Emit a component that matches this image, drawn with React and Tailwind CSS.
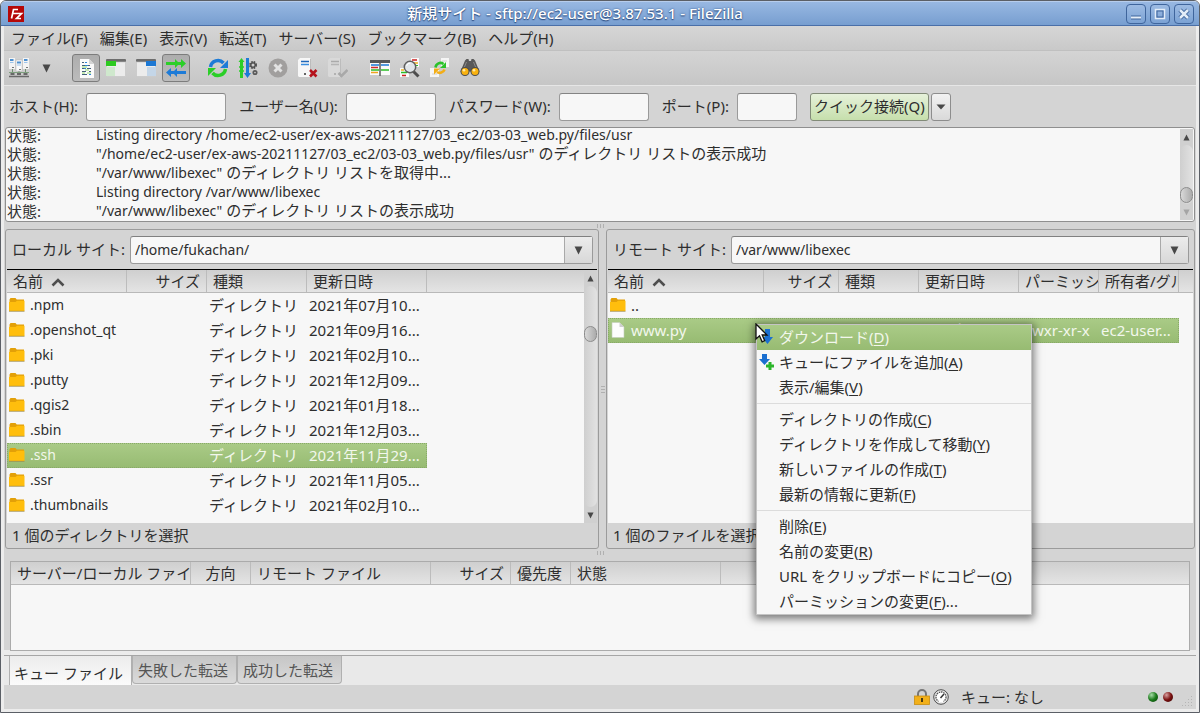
import { useState } from 'react';

const menus = ['ファイル(F)', '編集(E)', '表示(V)', '転送(T)', 'サーバー(S)', 'ブックマーク(B)', 'ヘルプ(H)'];

const logLines = [
    { latin: 'Listing directory /home/ec2-user/ex-aws-20211127/03_ec2/03-03_web.py/files/usr', text: '' },
    { latin: '"/home/ec2-user/ex-aws-20211127/03_ec2/03-03_web.py/files/usr"', text: ' のディレクトリ リストの表示成功' },
    { latin: '"/var/www/libexec"', text: ' のディレクトリ リストを取得中...' },
    { latin: 'Listing directory /var/www/libexec', text: '' },
    { latin: '"/var/www/libexec"', text: ' のディレクトリ リストの表示成功' },
];

const localFiles = [
    { name: '.npm', date: '2021年07月10...' },
    { name: '.openshot_qt', date: '2021年09月16...' },
    { name: '.pki', date: '2021年02月10...' },
    { name: '.putty', date: '2021年12月09...' },
    { name: '.qgis2', date: '2021年01月18...' },
    { name: '.sbin', date: '2021年12月03...' },
    { name: '.ssh', date: '2021年11月29...' },
    { name: '.ssr', date: '2021年11月05...' },
    { name: '.thumbnails', date: '2021年02月10...' },
    { name: '.vnc', date: '2021年02月10...' },
];

const contextMenu = [
    [
        { label: 'ダウンロード', hotkey: 'D', icon: 'download' },
        { label: 'キューにファイルを追加', hotkey: 'A', icon: 'queue' },
        { label: '表示/編集', hotkey: 'V' },
    ],
    [
        { label: 'ディレクトリの作成', hotkey: 'C' },
        { label: 'ディレクトリを作成して移動', hotkey: 'Y' },
        { label: '新しいファイルの作成', hotkey: 'T' },
        { label: '最新の情報に更新', hotkey: 'F' },
    ],
    [
        { label: '削除', hotkey: 'E' },
        { label: '名前の変更', hotkey: 'R' },
        { label: 'URL をクリップボードにコピー', hotkey: 'O' },
        { label: 'パーミッションの変更', hotkey: 'F', tail: '...' },
    ],
];

const headBar = 'bg-linear-to-b from-[#cfcfcf] to-[#e4e4e4] border-b border-[#b9b9b9]';
const selectedRow = 'bg-linear-to-b from-[#aacb87] to-[#97bb72] text-[#f2f7ec] outline-1 -outline-offset-1 outline-dotted outline-[#88a968]';

/* ---------- Icons ---------- */

function Icon({ children, size = 20 }) {
    return <svg width={size} height={size} viewBox="0 0 20 20" aria-hidden="true" className="shrink-0">{children}</svg>;
}

function Triangle({ up, light, big }) {
    const fill = light ? '#a5a5a5' : '#484848';
    return (
        <svg width={big ? 9 : 7} height={big ? 9 : 7} viewBox="0 0 8 8" aria-hidden="true" className="shrink-0">
            <path d={up ? 'M4 0.5 7.5 7.5H0.5z' : 'M4 7.5 7.5 0.5H0.5z'} fill={fill} />
        </svg>
    );
}

function SiteManagerIcon() {
    return (
        <Icon>
            <path d="M3.500 11v5M10 13v3M16.500 11v5" stroke="#6f8f6f" fill="none" />
            <path d="M0 14.500h20" stroke="#7f9f7f" />
            <path d="M0 18.500h20" stroke="#686868" strokeWidth="1.500" />
            <path d="M1.500 16h4M8 16h4M14.500 16h4" stroke="#686868" strokeWidth="2" />
            <rect x="0" y="0" width="6" height="11" fill="#f4f4f4" />
            <rect x="14" y="0" width="6" height="11" fill="#f4f4f4" />
            <rect x="7" y="2" width="6" height="11" fill="#fbfbfb" stroke="#b5b5b5" strokeWidth="0.500" />
            <path d="M1 2h3.500M15 2h3.500M8 4.500h4" stroke="#4d90d0" strokeWidth="2" />
            <path d="M1 4.500h3.500M15 4.500h3.500M8 7h4" stroke="#9ec4ea" />
            <path d="M3 9.500h2M17 9.500h2M10 11.500h2" stroke="#777777" />
        </Icon>
    );
}

function LogIcon() {
    return (
        <Icon>
            <path d="M4 1h9l5 5v14H4z" fill="#fbfbfb" />
            <path d="M13 1v5h5z" fill="#d4d4d4" />
            <path d="M6 4.500h2M6 7.500h3M12 7.500h2M6 10.500h2M11 10.500h4M6 13.500h4M13 13.500h2M6 16.500h5" stroke="#44607c" />
            <path d="M9 4.500h2M9 7.500h3M8 10.500h2M13 16.500h2" stroke="#2f83d6" />
            <path d="M6 9h5M9 12h4M6 15h3M11 15h4" stroke="#8ed66c" />
        </Icon>
    );
}

function PaneIcon({ side }) {
    const left = side === 'left';
    return (
        <Icon>
            <rect x="0" y="1" width="20" height="3" rx="1" fill="#6d6d6d" />
            <rect x="0.500" y="4" width="19" height="14.500" fill="#ececec" stroke="#c2c2c2" strokeWidth="0.600" />
            {left ? (
                <>
                    <rect x="0" y="3" width="10" height="5" fill="#2ccb20" />
                    <rect x="0" y="9" width="9" height="9" fill="#cfe8cd" />
                </>
            ) : (
                <>
                    <rect x="10" y="3" width="10" height="5" fill="#1c78d4" />
                    <rect x="11" y="9" width="9" height="9" fill="#c4d6e8" />
                </>
            )}
        </Icon>
    );
}

function TransferIcon() {
    return (
        <Icon>
            <path d="M0 4h9V1l3 3h3V1l5 4.500L15 10V7h-3l-3 3V7H0z" fill="#2bcf28" />
            <path d="M20 13h-9v-3l-3 3H5v-3l-5 4.500L5 19v-3h3l3 3v-3h9z" fill="#1d7bd7" />
        </Icon>
    );
}

function RefreshIcon() {
    return (
        <Icon>
            <path d="M2.500 9A7.500 7.500 0 0 1 15.500 5" stroke="#1d7bd7" strokeWidth="3.500" fill="none" />
            <path d="M20 2v8h-8z" fill="#1d7bd7" />
            <path d="M17.500 11A7.500 7.500 0 0 1 4.500 15" stroke="#2bcf28" strokeWidth="3.500" fill="none" />
            <path d="M0 18v-8h8z" fill="#2bcf28" />
        </Icon>
    );
}

function ProcessQueueIcon() {
    return (
        <Icon>
            <path d="M3.500 0 6.500 4H5v16H2V4H.5z" fill="#2bcf28" />
            <path d="M1 9h5M1 13h5" stroke="#2bcf28" strokeWidth="1.500" />
            <path d="M8 0h3v15h2l-3.500 5L6 15h2z" fill="#1d7bd7" />
            <circle cx="15" cy="7" r="3" fill="none" stroke="#4f4f4f" strokeWidth="2" strokeDasharray="1.600 0.800" />
            <circle cx="15" cy="7" r="2.200" fill="none" stroke="#4f4f4f" strokeWidth="1.300" />
            <circle cx="17" cy="14.500" r="1.700" fill="none" stroke="#5a5a5a" strokeWidth="1.700" />
        </Icon>
    );
}

function CancelIcon() {
    return (
        <Icon>
            <circle cx="10" cy="10" r="9.500" fill="#a19f9e" />
            <path d="M6.500 6.500l7 7M13.500 6.500l-7 7" stroke="#e2e2e2" strokeWidth="3" />
        </Icon>
    );
}

function ServerIcon({ off }) {
    return (
        <Icon>
            <path d="M0 2 2 0h11v19H1l-1-1z" fill={off ? '#d9d9d9' : '#f7f7f7'} />
            <path d="M13 0v19h-1V1z" fill="#bcbcbc" />
            <path d="M3 3.500h8" stroke={off ? '#aaaaaa' : '#1c66b8'} strokeWidth="1.500" />
            <path d="M3 6.500h8" stroke={off ? '#b5b5b5' : '#3a8ee0'} strokeWidth="1.500" />
            <circle cx="7" cy="16" r="1" fill={off ? '#a5a5a5' : '#333333'} />
            {off
                ? <path d="M10.500 15l3 3 6-6" stroke="#a9a9a9" strokeWidth="2.500" fill="none" />
                : <path d="M12 12l6.500 6.500M18.500 12 12 18.500" stroke="#b5121b" strokeWidth="2.600" />}
        </Icon>
    );
}

function CompareIcon() {
    return (
        <Icon>
            <rect x="0" y="3" width="20" height="14" fill="#fafafa" />
            <rect x="0" y="2" width="20" height="3" fill="#585858" />
            <path d="M1 7h8M11 7h8" stroke="#1d7bd7" strokeWidth="1.500" />
            <path d="M1 9.500h7" stroke="#d02a2a" strokeWidth="1.500" />
            <path d="M1 12h8M11 12h8" stroke="#2bbf28" strokeWidth="1.500" />
            <path d="M1 14.500h7" stroke="#efa51e" strokeWidth="1.500" />
            <path d="M10 5v13" stroke="#585858" strokeWidth="1.500" />
        </Icon>
    );
}

function SearchFilesIcon() {
    return (
        <Icon>
            <rect x="11" y="0" width="8" height="9" fill="#fafafa" />
            <path d="M12 2h5" stroke="#cc1f1f" strokeWidth="1.500" />
            <path d="M14 5h4" stroke="#efb01e" strokeWidth="1.500" />
            <path d="M15 7.500h3" stroke="#2bbf28" />
            <rect x="0" y="10" width="9" height="9" fill="#fafafa" />
            <path d="M1 12h3" stroke="#efb01e" strokeWidth="1.500" />
            <path d="M1 14.500h6" stroke="#2bbf28" strokeWidth="1.500" />
            <path d="M2 17.500h4" stroke="#cc1f1f" strokeWidth="1.500" />
            <path d="M13.500 13.500l5 5" stroke="#4d4d4d" strokeWidth="3" />
            <circle cx="10" cy="9" r="5.700" fill="#e1e6ea" stroke="#5f5f5f" strokeWidth="1.500" />
            <path d="M6.500 8a4 4 0 0 1 4-3" stroke="#ffffff" fill="none" />
        </Icon>
    );
}

function SyncBrowseIcon() {
    return (
        <Icon>
            <path d="M11 0h8v9h-8zM0 10h9v9H0z" fill="#f5f5f5" />
            <path d="M12 3h5M2 16h5" stroke="#d0d0d0" />
            <path d="M5.500 9.500A5 5 0 0 1 13.500 6" stroke="#2bc22a" strokeWidth="2.600" fill="none" />
            <path d="M16 4v6h-6z" fill="#2bc22a" />
            <path d="M14.500 11.500A5 5 0 0 1 7 14" stroke="#f3ae17" strokeWidth="2.600" fill="none" />
            <path d="M4 16.500v-6h6z" fill="#f3ae17" />
        </Icon>
    );
}

function BinocularsIcon() {
    return (
        <Icon>
            <path d="M5 2.500 6.500 1h2l.5 2h2l.5-2h2L15 2.500l4.500 11H.5z" fill="#585858" />
            <path d="M6.500 4 4 10M13.500 4l2.500 6" stroke="#8a8a8a" />
            <circle cx="5" cy="13.500" r="4.500" fill="#4c4c4c" />
            <circle cx="15" cy="13.500" r="4.500" fill="#4c4c4c" />
            <circle cx="5" cy="13.500" r="3.500" fill="#f9b20f" />
            <circle cx="15" cy="13.500" r="3.500" fill="#f9b20f" />
            <circle cx="4" cy="12.300" r="1.300" fill="#ffe9a8" />
            <circle cx="14" cy="12.300" r="1.300" fill="#ffe9a8" />
        </Icon>
    );
}

function FolderIcon() {
    return (
        <svg width="16" height="16" viewBox="0 0 16 16" aria-hidden="true" className="shrink-0">
            <path d="M0.500 2.500 1.500 1h5l1.200 1.500H15v5H0.500z" fill="#e3a008" />
            <path d="M0 5h6.500L8 3.800h7.500V14H0z" fill="#ffbe0d" />
            <path d="M0 14.300h15.500" stroke="#a08a48" strokeWidth="0.800" />
        </svg>
    );
}

function FileIcon() {
    return (
        <svg width="16" height="16" viewBox="0 0 16 16" aria-hidden="true" className="shrink-0">
            <path d="M2 0.500h7.500L14 5v10.500H2z" fill="#fdfdfd" stroke="#c4ccbc" strokeWidth="0.600" />
            <path d="M9.500 0.500V5H14z" fill="#cfcfcf" />
        </svg>
    );
}

function QueueArrowIcon({ plus }) {
    return (
        <svg width="16" height="16" viewBox="0 0 16 16" aria-hidden="true" className="shrink-0">
            <path d={plus ? 'M3 0h5v5h3l-5.500 6L0 5h3z' : 'M6 0h5v8h3l-5.500 7-5.500-7H6z'} fill="#1a6fd0" />
            {plus && <path d="M9.500 8h3v2.500H15v3h-2.500V16h-3v-2.500H7v-3h2.500z" fill="#2bb52a" />}
        </svg>
    );
}

/* ---------- Small pieces ---------- */

function ToolButton({ label, pressed, children }) {
    return (
        <button
            aria-label={label}
            className={`flex h-7 w-7 items-center justify-center rounded-[3px] border ${pressed ? 'border-[#7c7c7c] bg-linear-to-b from-[#adadad] to-[#bcbcbc]' : 'border-transparent'}`}
        >
            {children}
        </button>
    );
}

function QuickField({ id, label, width, type = 'text' }) {
    return (
        <div className="flex items-center gap-2">
            <label htmlFor={id} className="pb-0.5 whitespace-nowrap">{label}</label>
            <input id={id} type={type} className={`h-7 rounded-[3px] border border-[#9a9a9a] border-t-[#848484] bg-[#f7f7f7] px-1 ${width}`} />
        </div>
    );
}

function Scrollbar({ before, after, endDisabled }) {
    return (
        <div className="flex w-[13px] shrink-0 flex-col items-center bg-[#d0d0d0]">
            <div className="flex h-4 items-center"><Triangle up /></div>
            <div className="flex w-full flex-1 flex-col rounded-full bg-linear-to-r from-[#cfcfcf] to-[#e2e2e2]">
                <div className={before} />
                <div className="h-4 shrink-0 rounded-full border border-[#8c8c8c] bg-linear-to-r from-[#d9d9d9] to-[#ababab]" />
                <div className={after} />
            </div>
            <div className="flex h-4 items-center"><Triangle light={endDisabled} /></div>
        </div>
    );
}

function Grip({ vertical }) {
    return (
        <div className={`flex shrink-0 items-center justify-center gap-[2px] ${vertical ? 'w-[7px] flex-col' : 'h-[7px]'}`}>
            {[0, 1, 2].map((i) => (
                <span key={i} className={vertical ? 'h-px w-1 bg-[#b0b0b0]' : 'h-1 w-px bg-[#b0b0b0]'} />
            ))}
        </div>
    );
}

function HeadCell({ children, right, center, sorted }) {
    return (
        <th className={`h-[22px] overflow-hidden border-r border-[#bcbcbc] px-1.5 font-normal whitespace-nowrap ${right ? 'text-right' : center ? 'text-center' : 'text-left'}`}>
            {children}
            {sorted && (
                <svg width="14" height="9" viewBox="0 0 14 9" aria-hidden="true" className="ml-2 inline">
                    <path d="M1.500 7.500 7 2l5.500 5.500" fill="none" stroke="#4e4e4e" strokeWidth="2.600" />
                </svg>
            )}
        </th>
    );
}

function SitePanel({ id, label, path, status, children, menu }) {
    return (
        <section className="relative flex min-h-0 min-w-0 flex-col rounded-[3px] border border-[#9b9b9b] bg-[#d4d4d4] p-px">
            <div className="flex h-[39px] shrink-0 items-center gap-[5px] border-b border-black pr-1 pl-[5px]">
                <label htmlFor={id} className="pb-0.5 whitespace-nowrap">{label}</label>
                <div className="flex h-7 min-w-0 flex-1 rounded-[3px] border border-[#9a9a9a] border-t-[#808080] bg-[#f7f7f7]">
                    <input id={id} defaultValue={path} className="min-w-0 flex-1 bg-transparent px-1 text-[14px]" />
                    <button aria-label={`${label} 履歴`} className="flex w-7 items-center justify-center border-l border-[#a9a9a9] bg-linear-to-b from-[#ececec] to-[#d8d8d8]">
                        <Triangle big />
                    </button>
                </div>
            </div>
            {children}
            <div className="flex h-6 shrink-0 items-center pl-[5px]">{status}</div>
            {menu}
        </section>
    );
}

function LocalColumns() {
    return (
        <colgroup>
            <col className="w-[120px]" />
            <col className="w-[80px]" />
            <col className="w-[100px]" />
            <col className="w-[120px]" />
        </colgroup>
    );
}

function LocalList() {
    return (
        <div className="flex min-h-0 flex-1 overflow-hidden bg-[#f7f7f7]">
            <div className="min-h-0 flex-1 overflow-hidden">
                <div className={headBar}>
                    <table className="w-[420px] table-fixed border-separate border-spacing-0">
                        <LocalColumns />
                        <thead>
                            <tr>
                                <HeadCell sorted>名前</HeadCell>
                                <HeadCell right>サイズ</HeadCell>
                                <HeadCell>種類</HeadCell>
                                <HeadCell>更新日時</HeadCell>
                            </tr>
                        </thead>
                    </table>
                </div>
                <table className="w-[420px] table-fixed">
                    <LocalColumns />
                    <tbody>
                        {localFiles.map((file) => (
                            <tr key={file.name} className={`h-[25px] ${file.name === '.ssh' ? selectedRow : ''}`}>
                                <td className="pb-0.5">
                                    <div className="flex items-center gap-[5px] pl-0.5 text-[14px]"><FolderIcon />{file.name}</div>
                                </td>
                                <td />
                                <td className="pb-0.5 pl-0.5 whitespace-nowrap">ディレクトリ</td>
                                <td className="pb-0.5 pl-0.5 whitespace-nowrap">{file.date}</td>
                            </tr>
                        ))}
                    </tbody>
                </table>
            </div>
            <Scrollbar before="grow-[40]" after="grow-[165]" />
        </div>
    );
}

function RemoteColumns() {
    return (
        <colgroup>
            <col className="w-[156px]" />
            <col className="w-[75px]" />
            <col className="w-[80px]" />
            <col className="w-[100px]" />
            <col className="w-[80px]" />
            <col className="w-[80px]" />
        </colgroup>
    );
}

function RemoteList() {
    return (
        <div className="min-h-0 flex-1 overflow-hidden bg-[#f7f7f7]">
            <div className={headBar}>
                <table className="w-[571px] table-fixed border-separate border-spacing-0">
                    <RemoteColumns />
                    <thead>
                        <tr>
                            <HeadCell sorted>名前</HeadCell>
                            <HeadCell right>サイズ</HeadCell>
                            <HeadCell>種類</HeadCell>
                            <HeadCell>更新日時</HeadCell>
                            <HeadCell>パーミッション</HeadCell>
                            <HeadCell>所有者/グループ</HeadCell>
                        </tr>
                    </thead>
                </table>
            </div>
            <table className="w-[571px] table-fixed">
                <RemoteColumns />
                <tbody>
                    <tr className="h-[25px]">
                        <td className="pb-0.5"><div className="flex items-center gap-[5px] pl-0.5"><FolderIcon />..</div></td>
                        <td colSpan={5} />
                    </tr>
                    <tr className={`h-[25px] ${selectedRow}`}>
                        <td className="pb-0.5"><div className="flex items-center gap-[5px] pl-0.5"><FileIcon />www.py</div></td>
                        <td className="pr-1.5 pb-0.5 text-right">5,312</td>
                        <td />
                        <td className="overflow-hidden pb-0.5 pl-0.5 whitespace-nowrap">2021年11月...</td>
                        <td className="overflow-hidden pb-0.5 pl-0.5 whitespace-nowrap">-rwxr-xr-x</td>
                        <td className="overflow-hidden pb-0.5 pl-0.5 whitespace-nowrap">ec2-user...</td>
                    </tr>
                </tbody>
            </table>
        </div>
    );
}

function ContextMenu() {
    return (
        <div role="menu" className="absolute top-[94px] left-[149px] z-10 w-[276px] border border-[#c4c4c4] bg-[#f7f7f7] shadow-[0_2px_8px_2px_rgba(0,0,0,0.5)]">
            {contextMenu.map((group, g) => (
                <div key={g} className={g > 0 ? 'mt-[3px] border-t border-[#dcdcdc] pt-[3px]' : ''}>
                    {group.map((item) => (
                        <button
                            key={item.label}
                            role="menuitem"
                            className={`flex h-[25px] w-full items-center gap-1 pb-0.5 pl-0.5 text-left whitespace-nowrap ${item.icon === 'download' ? 'bg-linear-to-b from-[#aacb87] to-[#97bb72] text-[#f2f7ec]' : ''}`}
                        >
                            <span className="w-4">
                                {item.icon && <QueueArrowIcon plus={item.icon === 'queue'} />}
                            </span>
                            <span>{item.label}(<span className="underline underline-offset-2">{item.hotkey}</span>){item.tail}</span>
                        </button>
                    ))}
                </div>
            ))}
            {/* Mouse pointer */}
            <svg width="14" height="20" viewBox="0 0 14 20" aria-hidden="true" className="absolute -top-0.5 -left-0.5">
                <path d="M1 1v15l3.500-3.200 2.600 6 2.600-1.200-2.500-5.600H12z" fill="#ffffff" stroke="#111111" strokeWidth="1.300" />
            </svg>
        </div>
    );
}

function TitleButton({ label, children }) {
    return (
        <button aria-label={label} className="flex h-5 w-5 items-center justify-center rounded-[4px] border border-[#3f659c] bg-linear-to-b from-[#9dbbe3] to-[#7ba2d4]">
            <svg width="16" height="16" viewBox="0 0 16 16" fill="none" aria-hidden="true">{children}</svg>
        </button>
    );
}

/* ---------- Window ---------- */

export default function App() {
    const [tab, setTab] = useState(0);
    const tabs = ['キュー ファイル', '失敗した転送', '成功した転送'];

    return (
        <div className="flex h-screen flex-col overflow-hidden rounded-t-md border border-[#5b5f66] bg-[#ececec] font-['Noto_Sans','Noto_Sans_CJK_JP',sans-serif] text-[15px] leading-5 text-[#2e2e2e]">
            {/* Title bar */}
            <header className="flex h-[25px] shrink-0 items-center border-t border-b border-t-[#b7cdec] border-b-[#4a6fa8] bg-linear-to-b from-[#98b8e2] to-[#779ed0] pr-[5px] pl-[7px]">
                <svg width="16" height="16" viewBox="0 0 16 16" aria-hidden="true" className="shrink-0">
                    <rect width="16" height="16" fill="#b50808" />
                    <path d="M3.500 12.500 5.500 3.500H10M4.500 7.500h4M8.500 7.500h5L8.500 12.500h4.500" fill="none" stroke="#ffffff" strokeWidth="1.700" />
                </svg>
                <h1 className="flex-1 pb-0.5 text-center font-medium text-white [text-shadow:0_0_2px_#2c4c80,0_1px_1px_#2c4c80]">
                    新規サイト - sftp://ec2-user@3.87.53.1 - FileZilla
                </h1>
                <div className="flex gap-1">
                    <TitleButton label="最小化"><path d="M3 11.500h10" stroke="#3f659c" strokeWidth="4" /><path d="M3 11.500h10" stroke="#e4edf8" strokeWidth="2" /></TitleButton>
                    <TitleButton label="最大化"><rect x="3.500" y="3.500" width="9" height="9" stroke="#e4edf8" strokeWidth="1.500" /><rect x="5" y="5" width="6" height="6" stroke="#3f659c" /></TitleButton>
                    <TitleButton label="閉じる"><path d="M4 4l8 8M12 4l-8 8" stroke="#3f659c" strokeWidth="4.500" /><path d="M4 4l8 8M12 4l-8 8" stroke="#e4edf8" strokeWidth="2.500" /></TitleButton>
                </div>
            </header>

            <div className="mx-[3px] mb-[3px] flex min-h-0 flex-1 flex-col bg-[#d4d4d4]">
                {/* Menu bar */}
                <nav className="flex h-[25px] shrink-0 items-center gap-3 border-b border-[#c0c0c0] bg-linear-to-b from-[#d6d6d6] to-[#c9c9c9] px-[7px]">
                    {menus.map((menu) => (
                        <button key={menu} className="whitespace-nowrap">{menu}</button>
                    ))}
                </nav>

                {/* Toolbar */}
                <div role="toolbar" className="flex h-[35px] shrink-0 items-center gap-3.5 border-b border-[#e6e6e6] bg-linear-to-b from-[#d4d4d4] to-[#c6c6c6] pl-px">
                    <div className="flex w-[53px] gap-[5px]">
                        <ToolButton label="サイトマネージャー"><SiteManagerIcon /></ToolButton>
                        <button aria-label="サイト一覧" className="flex w-4 items-center justify-center"><Triangle big /></button>
                    </div>
                    <div className="flex gap-0.5">
                        <ToolButton label="メッセージログ" pressed><LogIcon /></ToolButton>
                        <ToolButton label="ローカルツリー"><PaneIcon side="left" /></ToolButton>
                        <ToolButton label="リモートツリー"><PaneIcon side="right" /></ToolButton>
                        <ToolButton label="転送キュー" pressed><TransferIcon /></ToolButton>
                    </div>
                    <div className="flex gap-0.5">
                        <ToolButton label="更新"><RefreshIcon /></ToolButton>
                        <ToolButton label="キューの処理"><ProcessQueueIcon /></ToolButton>
                        <ToolButton label="キャンセル"><CancelIcon /></ToolButton>
                        <ToolButton label="切断"><ServerIcon /></ToolButton>
                        <ToolButton label="再接続"><ServerIcon off /></ToolButton>
                    </div>
                    <div className="flex gap-0.5">
                        <ToolButton label="ディレクトリの比較"><CompareIcon /></ToolButton>
                        <ToolButton label="ファイル検索"><SearchFilesIcon /></ToolButton>
                        <ToolButton label="同期ブラウズ"><SyncBrowseIcon /></ToolButton>
                        <ToolButton label="検索"><BinocularsIcon /></ToolButton>
                    </div>
                </div>

                {/* Quickconnect */}
                <form className="flex h-[41px] shrink-0 items-center gap-[13px] px-[5px]" onSubmit={(e) => e.preventDefault()}>
                    <QuickField id="host" label="ホスト(H):" width="w-[140px]" />
                    <QuickField id="user" label="ユーザー名(U):" width="w-[90px]" />
                    <QuickField id="pass" label="パスワード(W):" width="w-[90px]" type="password" />
                    <QuickField id="port" label="ポート(P):" width="w-[60px]" />
                    <div className="flex gap-0.5">
                        <button className="h-7 rounded-[3px] border border-[#828b78] bg-linear-to-b from-[#e6f1da] to-[#c6dfac] px-[3px] pb-0.5 whitespace-nowrap">クイック接続(Q)</button>
                        <button aria-label="接続履歴" className="flex h-7 w-5 items-center justify-center rounded-[3px] border border-[#8d8d8d] bg-linear-to-b from-[#f2f2f2] to-[#d9d9d9]">
                            <svg width="10" height="6" viewBox="0 0 10 6" aria-hidden="true"><path d="M0.500 0.500h9L5 5.500z" fill="#484848" /></svg>
                        </button>
                    </div>
                </form>

                {/* Message log */}
                <div className="mx-px flex h-[95px] shrink-0 rounded-[3px] border border-[#8f8f8f] bg-[#f7f7f7] p-px">
                    <ul className="flex min-w-0 flex-1 flex-col justify-end overflow-hidden">
                        {logLines.map((line, i) => (
                            <li key={i} className="flex h-[19px] shrink-0 items-center whitespace-pre">
                                <span className="w-[89px]">状態:</span>
                                <span><span className="text-[14px]">{line.latin}</span>{line.text}</span>
                            </li>
                        ))}
                    </ul>
                    <Scrollbar before="grow-[45]" after="grow-[1]" endDisabled />
                </div>
                <Grip />

                {/* Local and remote sites */}
                <div className="mx-px grid min-h-0 flex-1 grid-cols-[594fr_7px_589fr] grid-rows-1">
                    <SitePanel id="local" label="ローカル サイト:" path="/home/fukachan/" status="1 個のディレクトリを選択">
                        <LocalList />
                    </SitePanel>
                    <Grip vertical />
                    <SitePanel id="remote" label="リモート サイト:" path="/var/www/libexec" status="1 個のファイルを選択" menu={<ContextMenu />}>
                        <RemoteList />
                    </SitePanel>
                </div>
                <Grip />

                {/* Transfer queue */}
                <div className="flex h-[100px] shrink-0 flex-col border-b border-[#a6a6a6] bg-linear-to-b from-[#d4d4d4] from-95% to-[#ececec] to-95% px-1.5 pt-[5px] pb-1">
                    <div className="flex-1 border border-[#ababab] bg-[#f7f7f7]">
                        <div className={headBar}>
                            <table className="w-[710px] table-fixed border-separate border-spacing-0">
                                <colgroup>
                                    <col className="w-[180px]" />
                                    <col className="w-[60px]" />
                                    <col className="w-[180px]" />
                                    <col className="w-[80px]" />
                                    <col className="w-[60px]" />
                                    <col className="w-[150px]" />
                                </colgroup>
                                <thead>
                                    <tr>
                                        <HeadCell>サーバー/ローカル ファイル</HeadCell>
                                        <HeadCell center>方向</HeadCell>
                                        <HeadCell>リモート ファイル</HeadCell>
                                        <HeadCell right>サイズ</HeadCell>
                                        <HeadCell>優先度</HeadCell>
                                        <HeadCell>状態</HeadCell>
                                    </tr>
                                </thead>
                            </table>
                        </div>
                    </div>
                </div>
                <div role="tablist" className="flex h-[29px] shrink-0 bg-[#e9e9e9] pl-[5px]">
                    {tabs.map((name, i) => (
                        <button
                            key={name}
                            role="tab"
                            aria-selected={tab === i}
                            onClick={() => setTab(i)}
                            className={tab === i
                                ? 'h-[29px] border-x border-[#b0b0b0] bg-linear-to-b from-[#ececec] to-[#fbfbfb] pt-1 pr-2 pl-1'
                                : 'h-7 rounded-b-[4px] border border-t-0 border-[#b0b0b0] bg-linear-to-b from-[#c6c6c6] to-[#dadada] pr-2 pl-[5px] text-[#555555]'}
                        >
                            {name}
                        </button>
                    ))}
                </div>

                {/* Status bar */}
                <footer className="flex h-6 shrink-0 items-center justify-end pr-[3px]">
                    <svg width="16" height="16" viewBox="0 0 16 16" aria-hidden="true">
                        <path d="M4 8V5a4 4 0 0 1 8 0v3" fill="none" stroke="#777777" strokeWidth="2" />
                        <rect x="0.500" y="7" width="15" height="8.500" fill="#f2b01a" stroke="#c98d10" strokeWidth="0.800" />
                        <path d="M8 9v4" stroke="#4b3a12" strokeWidth="2" />
                    </svg>
                    <svg width="16" height="16" viewBox="0 0 16 16" aria-hidden="true" className="ml-[3px]">
                        <circle cx="8" cy="8" r="7.300" fill="#e6e6e6" stroke="#4e4e4e" />
                        <circle cx="8" cy="8" r="5" fill="#ffffff" stroke="#555555" strokeWidth="1.300" strokeDasharray="1.500 0.800" />
                        <path d="M7.500 9 11 5" stroke="#333333" strokeWidth="1.500" />
                        <path d="M5.500 12.500h5" stroke="#ffffff" strokeWidth="2.500" />
                    </svg>
                    <span className="ml-3 w-[187px]">キュー: なし</span>
                    <span className="h-2.5 w-2.5 rounded-full bg-radial-[at_35%_30%] from-[#a8dca8] via-[#1c7a1c] to-[#063a06]" />
                    <span className="ml-[5px] h-2.5 w-2.5 rounded-full bg-radial-[at_35%_30%] from-[#d8a0a0] via-[#7a1010] to-[#330404]" />
                    <svg width="12" height="12" viewBox="0 0 12 12" aria-hidden="true" className="mt-2 ml-2" fill="#b5b5b5">
                        <path d="M10 1h1v1h-1zM7 4h1v1H7zM10 4h1v1h-1zM4 7h1v1H4zM7 7h1v1H7zM10 7h1v1h-1zM1 10h1v1H1zM4 10h1v1H4zM7 10h1v1H7zM10 10h1v1h-1z" />
                    </svg>
                </footer>
            </div>
        </div>
    );
}
